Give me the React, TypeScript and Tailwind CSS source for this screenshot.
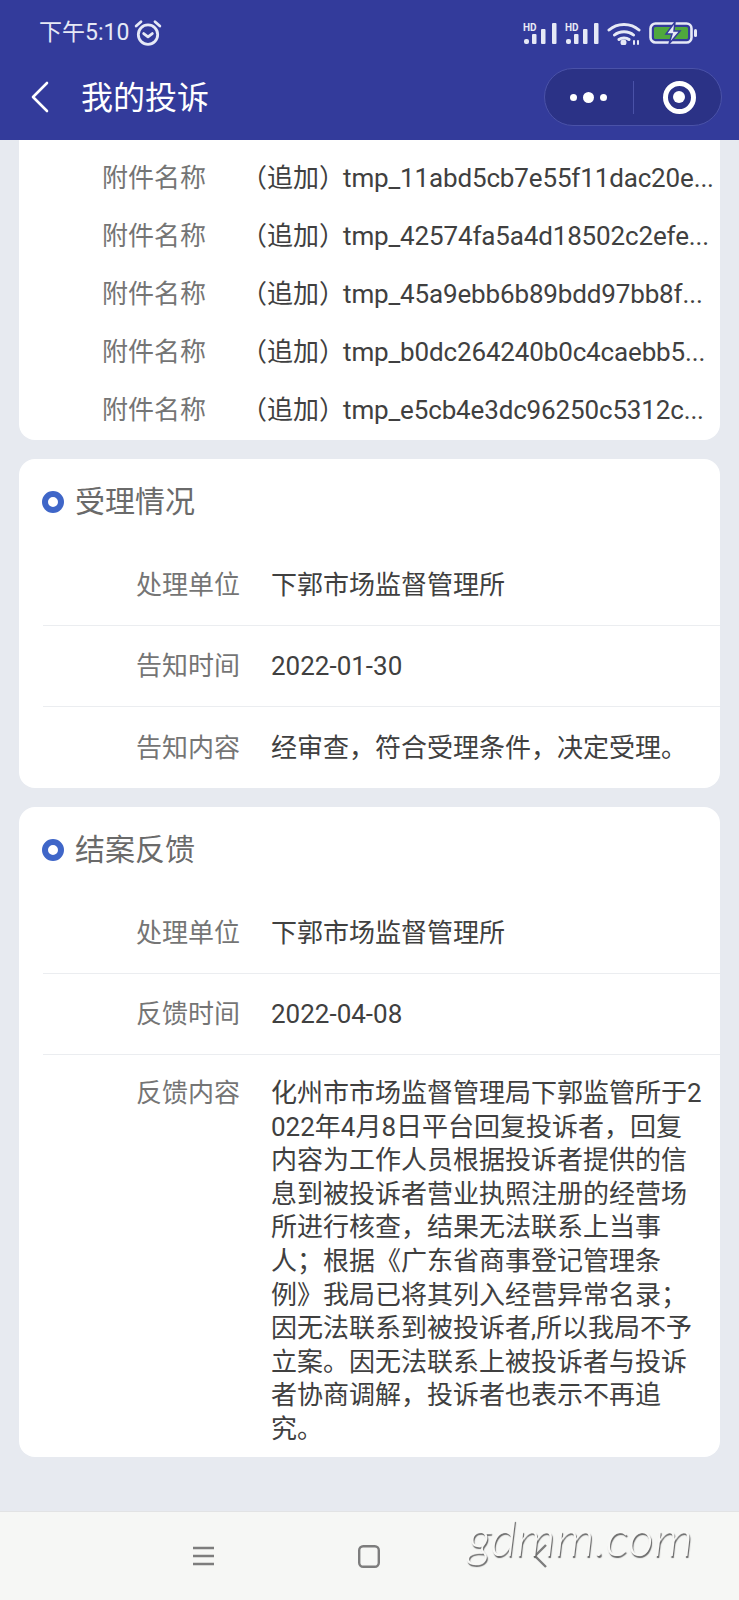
import type { ReactNode } from 'react'

const attachments = [
  'tmp_11abd5cb7e55f11dac20e...',
  'tmp_42574fa5a4d18502c2efe...',
  'tmp_45a9ebb6b89bdd97bb8f...',
  'tmp_b0dc264240b0c4caebb5...',
  'tmp_e5cb4e3dc96250c5312c...'
]

const SignalIcon = () => (
  <svg width="35" height="22" viewBox="0 0 35 22" fill="#e6e9f6">
    <text x="0" y="8.500" fontSize="10" fontWeight="700" fontFamily="Roboto, sans-serif">HD</text>
    <rect x="1" y="17" width="5" height="5" rx="2" />
    <rect x="9" y="12" width="4.500" height="10" rx="1" />
    <rect x="18" y="7" width="4.500" height="15" rx="1" />
    <rect x="29" y="1" width="4.500" height="21" rx="1" />
  </svg>
)

const SectionTitle = ({ title }: { title: string }) => (
  <div className="flex h-[86px] items-center pl-[23px]">
    <span className="h-[22px] w-[22px] rounded-full border-[6px] border-[#3f66c8]" />
    <span className="ml-[11px] text-[30px] text-[#6a6a6a]">{title}</span>
  </div>
)

const InfoRow = ({ label, value, last }: { label: string; value: string; last?: boolean }) => (
  <div className={`ml-6 flex h-[81px] items-center ${last ? '' : 'border-b border-[#ebedf0]'}`}>
    <div className="w-[197px] shrink-0 text-right text-[#757575]">{label}</div>
    <div className="ml-[31px] text-[#404040]">{value}</div>
  </div>
)

const Card = ({ children }: { children: ReactNode }) => (
  <section className="mt-[19px] rounded-[16px] bg-white">{children}</section>
)

export default function App() {
  return (
    <div className="relative flex h-[1600px] w-[739px] flex-col overflow-hidden bg-[#e7eaf0] font-['Roboto','Noto_Sans_CJK_SC',sans-serif] text-[26px] leading-[34px]">
      <header className="h-[140px] shrink-0 bg-[#333b9b] text-white">
        <div className="flex h-[64px] items-center justify-between pl-[39px] pr-[42px] pt-[2px]">
          <div className="flex items-center text-[23px] text-[#e6e9f6]">
            <span>下午5:10</span>
            <svg className="ml-[5px]" width="28" height="28" viewBox="0 0 26 26" fill="none" stroke="#e6e9f6" strokeWidth="2.600" strokeLinecap="round" strokeLinejoin="round">
              <circle cx="13" cy="14.500" r="9" />
              <path d="M9 13.500l4 3 4-3M2 6.500l4.500-4M24 6.500l-4.500-4" />
            </svg>
          </div>
          <div className="flex items-center gap-[7px]">
            <SignalIcon />
            <SignalIcon />
            <svg width="34" height="23" viewBox="0 0 34 23" fill="none" stroke="#e6e9f6" strokeWidth="3" strokeLinecap="round">
              <path d="M2 8c8-7.500 22-7.500 30 0M7.500 13c5-4.500 14-4.500 19 0M12 17.500c2.500-2 7.500-2 10 0" />
              <circle cx="16.500" cy="20.500" r="1.500" fill="#e6e9f6" />
              <path d="M27 22v-3M31 22v-3" strokeWidth="2" />
            </svg>
            <svg className="ml-[1px]" width="48" height="22" viewBox="0 0 48 22">
              <rect x="1.500" y="1.500" width="41" height="19" rx="5" fill="none" stroke="#e6e9f6" strokeWidth="2.600" />
              <rect x="5" y="5" width="34" height="12" rx="1.500" fill="#4fa83d" />
              <path d="M26 0l-9 12h6l-3 10 11-13h-6z" fill="#e6e9f6" stroke="#333b9b" strokeWidth="1.500" />
              <rect x="45" y="7" width="3" height="8" rx="1.500" fill="#e6e9f6" />
            </svg>
          </div>
        </div>
        <div className="flex h-[76px] items-center justify-between pb-[10px] pl-[31px] pr-[17px]">
          <div className="flex items-center">
            <svg width="18" height="32" viewBox="0 0 18 32" fill="none" stroke="#fff" strokeWidth="2.600" strokeLinecap="round" strokeLinejoin="round">
              <path d="M16 2L2 16l14 14" />
            </svg>
            <span className="ml-[32px] mt-[2px] text-[32px] leading-[40px]">我的投诉</span>
          </div>
          <div className="flex h-[58px] w-[178px] items-center rounded-full border border-[#4a52a8] bg-[#2b3286]">
            <div className="flex w-[88px] items-center justify-center gap-[6px] pr-[2px]">
              <span className="h-[7px] w-[7px] rounded-full bg-white" />
              <span className="h-[11px] w-[11px] rounded-full bg-white" />
              <span className="h-[7px] w-[7px] rounded-full bg-white" />
            </div>
            <span className="h-[33px] w-px bg-[#4a52a8]" />
            <div className="flex flex-1 items-center justify-center pl-[3px]">
              <span className="flex h-[33px] w-[33px] items-center justify-center rounded-full border-[5px] border-white">
                <span className="h-[12px] w-[12px] rounded-full bg-white" />
              </span>
            </div>
          </div>
        </div>
      </header>

      <main className="flex-1 overflow-hidden px-[19px]">
        <section className="rounded-b-[16px] bg-white pb-px pt-[9px]">
          {attachments.map((name) => (
            <div key={name} className="flex h-[58px] items-center whitespace-nowrap">
              <span className="ml-[83px] text-[#757575]">附件名称</span>
              <span className="ml-[35px] text-[#404040]">
                （追加）<span className="-ml-[2px] tracking-[-0.15px]">{name}</span>
              </span>
            </div>
          ))}
        </section>

        <Card>
          <SectionTitle title="受理情况" />
          <InfoRow label="处理单位" value="下郭市场监督管理所" />
          <InfoRow label="告知时间" value="2022-01-30" />
          <InfoRow label="告知内容" value="经审查，符合受理条件，决定受理。" last />
        </Card>

        <Card>
          <SectionTitle title="结案反馈" />
          <InfoRow label="处理单位" value="下郭市场监督管理所" />
          <InfoRow label="反馈时间" value="2022-04-08" />
          <div className="ml-6 flex pb-[10px] pr-3 pt-[22px] leading-[33.6px]">
            <div className="w-[197px] shrink-0 text-right text-[#757575]">反馈内容</div>
            <div className="ml-[31px] min-w-0 flex-1 break-all text-[#404040] [text-spacing-trim:space-all]">
              化州市市场监督管理局下郭监管所于2022年4月8日平台回复投诉者，回复内容为工作人员根据投诉者提供的信息到被投诉者营业执照注册的经营场所进行核查，结果无法联系上当事人；根据《广东省商事登记管理条例》我局已将其列入经营异常名录；因无法联系到被投诉者,所以我局不予立案。因无法联系上被投诉者与投诉者协商调解，投诉者也表示不再追究。
            </div>
          </div>
        </Card>
      </main>

      <nav className="flex h-[89px] shrink-0 items-start border-t border-[#e2e3e4] bg-[#f6f7f5] pl-[193px] pt-[32px]">
        <div className="flex items-center">
          <svg width="21" height="20" viewBox="0 0 21 20" stroke="#7d7d7d" strokeWidth="2.400">
            <path d="M0 2h21M0 10h21M0 18h21" />
          </svg>
          <svg className="ml-[144px]" width="22" height="23" viewBox="0 0 22 23" fill="none" stroke="#7d7d7d" strokeWidth="2.400">
            <rect x="1.200" y="1.200" width="19.600" height="20.600" rx="4" />
          </svg>
          <svg className="ml-[153px]" width="14" height="24" viewBox="0 0 14 24" fill="none" stroke="#7d7d7d" strokeWidth="2.400">
            <path d="M13 1L2 12l11 11" />
          </svg>
        </div>
      </nav>

      <div className="absolute left-[468px] top-[1507px] font-['Lato',sans-serif] text-[50px] font-light italic leading-[60px] text-[#f8f8f6] [text-shadow:1px_1.500px_1px_#666]">
        gdmm.com
      </div>
    </div>
  )
}
